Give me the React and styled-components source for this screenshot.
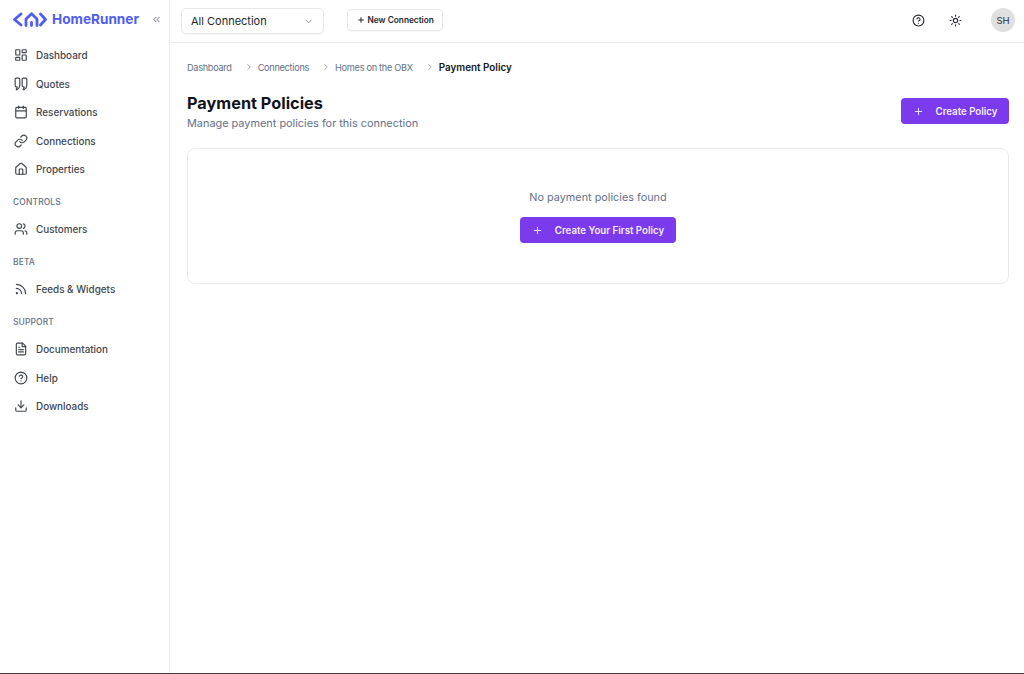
import React from "react";
import styled, { createGlobalStyle } from "styled-components";
import {
  Calendar,
  ChevronDown,
  ChevronRight,
  ChevronsLeft,
  CircleHelp,
  Download,
  FileText,
  House,
  LayoutDashboard,
  Link,
  Plus,
  Rss,
  Sun,
  Users,
} from "lucide-react";

const GlobalStyle = createGlobalStyle`
  html, body {
    margin: 0;
    padding: 0;
    background: #fff;
    font-family: Inter, "Liberation Sans", sans-serif;
  }
  * { box-sizing: border-box; }
`;

const QuoteIcon = () => (
  <svg width="14" height="14" viewBox="0 0 24 24" fill="none" stroke="currentColor" strokeWidth="2" strokeLinecap="round" strokeLinejoin="round">
    <path d="M4 2h4a2 2 0 0 1 2 2v10c0 4-2 6-5 8-.8.4-1.500-.4-1-1.200 1-1.300 1.500-2.500 1.500-3.800H4a2 2 0 0 1-2-2V4a2 2 0 0 1 2-2z" />
    <path d="M16 2h4a2 2 0 0 1 2 2v10c0 4-2 6-5 8-.8.4-1.500-.4-1-1.200 1-1.300 1.500-2.500 1.500-3.800H16a2 2 0 0 1-2-2V4a2 2 0 0 1 2-2z" />
  </svg>
);

const Logo = () => (
  <svg width="34" height="15" viewBox="0 0 34 15" fill="none" stroke="#4f5df0" strokeWidth="2.8" strokeLinecap="round" strokeLinejoin="round">
    <path d="M8 2 1.500 7.500 8 13" />
    <path d="M27.500 2 32.500 7.500 27.500 13" />
    <path d="M13 13.500V7L18.500 1.800 24 7v6.500" />
    <path d="M18.500 10.500v3" />
  </svg>
);

const navGroups = [
  {
    items: [
      { label: "Dashboard", icon: <LayoutDashboard size={14} /> },
      { label: "Quotes", icon: <QuoteIcon /> },
      { label: "Reservations", icon: <Calendar size={14} /> },
      { label: "Connections", icon: <Link size={14} /> },
      { label: "Properties", icon: <House size={14} /> },
    ],
  },
  { title: "CONTROLS", items: [{ label: "Customers", icon: <Users size={14} /> }] },
  { title: "BETA", items: [{ label: "Feeds & Widgets", icon: <Rss size={14} /> }] },
  {
    title: "SUPPORT",
    items: [
      { label: "Documentation", icon: <FileText size={14} /> },
      { label: "Help", icon: <CircleHelp size={14} /> },
      { label: "Downloads", icon: <Download size={14} /> },
    ],
  },
];

const crumbs = ["Dashboard", "Connections", "Homes on the OBX"];

const App = () => {
  return (
    <Page>
      <GlobalStyle />
      <Shell>
        <Sidebar>
          <Brand>
            <Logo />
            <BrandName>HomeRunner</BrandName>
            <Collapse>
              <ChevronsLeft size={11} />
            </Collapse>
          </Brand>
          {navGroups.map((group, index) => (
            <NavGroup key={`group-${index}`}>
              {group.title && <GroupTitle>{group.title}</GroupTitle>}
              {group.items.map((item) => (
                <NavItem key={item.label}>
                  {item.icon}
                  <span>{item.label}</span>
                </NavItem>
              ))}
            </NavGroup>
          ))}
        </Sidebar>
        <Main>
          <TopBar>
            <Select>
              <span>All Connection</span>
              <ChevronDown size={11} color="#8a8f98" />
            </Select>
            <NewButton>
              <Plus size={8} strokeWidth={3} />
              New Connection
            </NewButton>
            <TopRight>
              <IconButton $gap={24}>
                <CircleHelp size={13} />
              </IconButton>
              <IconButton $gap={29}>
                <Sun size={13} />
              </IconButton>
              <Avatar>SH</Avatar>
            </TopRight>
          </TopBar>
          <Content>
            <Breadcrumbs>
              {crumbs.map((crumb) => (
                <React.Fragment key={crumb}>
                  <Crumb>{crumb}</Crumb>
                  <Separator>
                    <ChevronRight size={10} />
                  </Separator>
                </React.Fragment>
              ))}
              <CurrentCrumb>Payment Policy</CurrentCrumb>
            </Breadcrumbs>
            <TitleRow>
              <div>
                <Title>Payment Policies</Title>
                <Subtitle>Manage payment policies for this connection</Subtitle>
              </div>
              <PrimaryButton>
                <Plus size={11} />
                Create Policy
              </PrimaryButton>
            </TitleRow>
            <EmptyCard>
              <EmptyText>No payment policies found</EmptyText>
              <PrimaryButton>
                <Plus size={11} />
                Create Your First Policy
              </PrimaryButton>
            </EmptyCard>
          </Content>
        </Main>
      </Shell>
      <BottomEdge />
    </Page>
  );
};

const Page = styled.div`
  display: flex;
  flex-direction: column;
  height: 674px;
  overflow: hidden;
`;

const Shell = styled.div`
  display: flex;
  flex: 1;
  min-height: 0;
`;

const BottomEdge = styled.div`
  height: 1px;
  background: #3c3c3c;
`;

const Sidebar = styled.aside`
  width: 170px;
  flex-shrink: 0;
  border-right: 1px solid #ececee;
  padding: 10px 0 0 14px;
`;

const Brand = styled.div`
  display: flex;
  align-items: center;
  height: 18px;
  margin: 0 0 12.75px -1px;
`;

const BrandName = styled.span`
  margin-left: 5px;
  font-size: 13.6px;
  font-weight: 700;
  color: #4f5df0;
`;

const Collapse = styled.span`
  display: flex;
  margin-left: 12px;
  color: #5b6472;
`;

const NavGroup = styled.nav`
  margin-bottom: 6px;
`;

const GroupTitle = styled.div`
  height: 25.5px;
  line-height: 27.5px;
  margin-left: -1px;
  font-size: 8.5px;
  font-weight: 500;
  letter-spacing: 0.1px;
  color: #64718a;
`;

const NavItem = styled.div`
  display: flex;
  align-items: center;
  gap: 8px;
  height: 28.5px;
  font-size: 9.9px;
  font-weight: 500;
  color: #424750;
  svg {
    flex-shrink: 0;
  }
`;

const Main = styled.main`
  flex: 1;
  min-width: 0;
`;

const TopBar = styled.header`
  display: flex;
  align-items: center;
  height: 43px;
  padding: 0 9px 0 11px;
  border-bottom: 1px solid #ececee;
`;

const Select = styled.div`
  display: flex;
  align-items: center;
  justify-content: space-between;
  width: 143px;
  height: 26px;
  padding: 0 9px;
  border: 1px solid #e6e8ec;
  border-radius: 5px;
  font-size: 11px;
  color: #24272d;
  box-shadow: 0 1px 1px rgba(0, 0, 0, 0.03);
`;

const NewButton = styled.div`
  display: flex;
  align-items: center;
  gap: 3px;
  height: 22px;
  margin: 0 0 2px 23px;
  padding: 0 8.5px;
  border: 1px solid #e6e8ec;
  border-radius: 4px;
  font-size: 8.3px;
  font-weight: 600;
  color: #24272d;
  box-shadow: 0 1px 1px rgba(0, 0, 0, 0.03);
`;

const TopRight = styled.div`
  display: flex;
  align-items: center;
  margin: 0 0 2px auto;
`;

const IconButton = styled.span`
  display: flex;
  margin-right: ${(props) => props.$gap}px;
  color: #24272d;
`;

const Avatar = styled.div`
  display: flex;
  align-items: center;
  justify-content: center;
  width: 24px;
  height: 24px;
  border-radius: 50%;
  background: #e0e0e0;
  font-size: 9.5px;
  color: #2c2f35;
`;

const Content = styled.div`
  padding: 18px 15px 0 17px;
`;

const Breadcrumbs = styled.div`
  display: flex;
  align-items: center;
  height: 12px;
  font-size: 9.2px;
`;

const Crumb = styled.span`
  color: #64718a;
  letter-spacing: -0.3px;
`;

const Separator = styled.span`
  display: flex;
  margin: 0 4px 0 12px;
  color: #8a93a3;
`;

const CurrentCrumb = styled.span`
  font-size: 9.9px;
  font-weight: 600;
  color: #141821;
`;

const TitleRow = styled.div`
  display: flex;
  align-items: center;
  justify-content: space-between;
  margin: 19px 0 18px;
`;

const Title = styled.h1`
  margin: 0;
  font-size: 16.3px;
  line-height: 22px;
  font-weight: 700;
  color: #0f1420;
`;

const Subtitle = styled.p`
  margin: 2px 0 0;
  font-size: 10.9px;
  line-height: 14px;
  color: #64718a;
`;

const PrimaryButton = styled.div`
  display: flex;
  align-items: center;
  gap: 12px;
  height: 26px;
  padding: 0 11.5px;
  border-radius: 4px;
  background: #7c3aed;
  font-size: 9.7px;
  font-weight: 600;
  color: #f3ecfe;
`;

const EmptyCard = styled.section`
  display: flex;
  flex-direction: column;
  align-items: center;
  height: 136px;
  padding-top: 41px;
  border: 1px solid #e8eaee;
  border-radius: 8px;
`;

const EmptyText = styled.p`
  margin: 0 0 13px;
  font-size: 10.85px;
  line-height: 14px;
  color: #64718a;
`;

export default App;
